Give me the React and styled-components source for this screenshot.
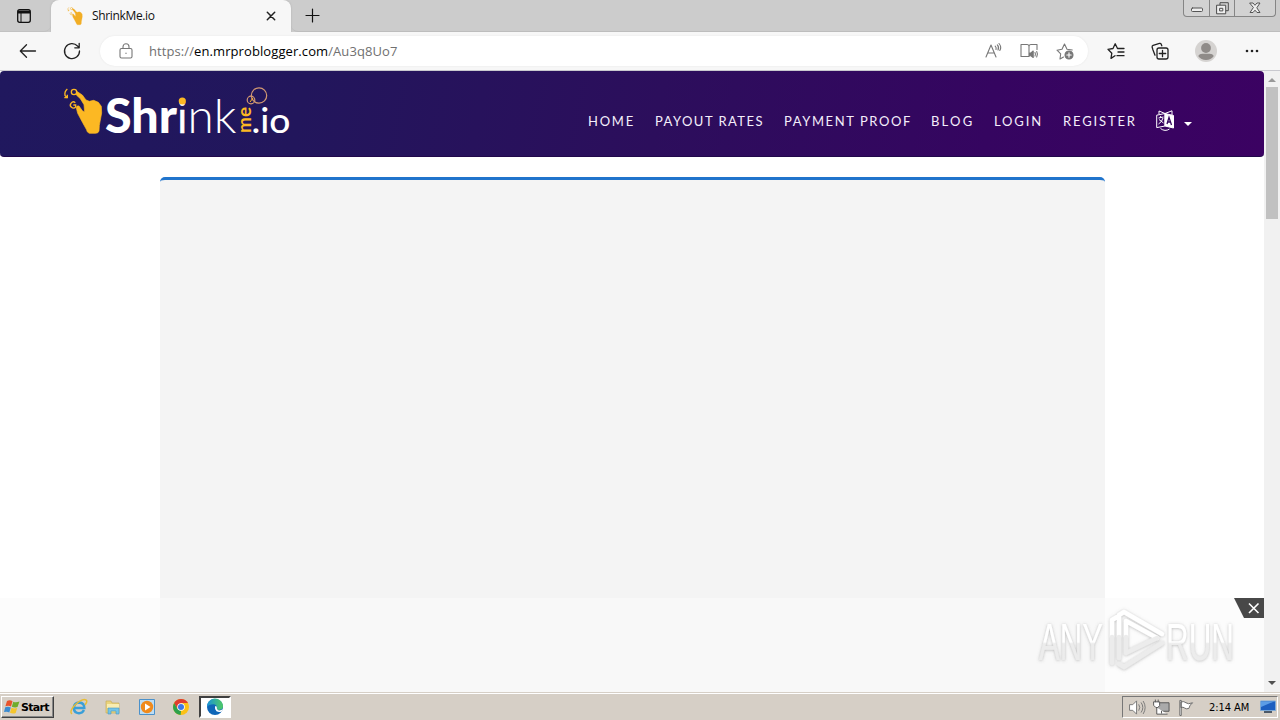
import React from "react";
import styled, { createGlobalStyle } from "styled-components";

const Global = createGlobalStyle`
  * { box-sizing: border-box; }
  body { margin: 0; overflow: hidden; background: #fff; }
  svg { display: block; flex: none; overflow: visible; }
`;

const Screen = styled.div`
  width: 1280px;
  height: 720px;
  display: flex;
  flex-direction: column;
  overflow: hidden;
  font-family: "Open Sans", sans-serif;
`;

const TabStrip = styled.div`
  display: flex;
  height: 32px;
  background: #cccccc;
`;
const Workspaces = styled.div`
  width: 51px;
  display: flex;
  align-items: center;
  padding-left: 16px;
  border-bottom: 1px solid #c2c2c2;
  border-bottom-right-radius: 7px;
`;
const Tab = styled.div`
  width: 240px;
  height: 32px;
  display: flex;
  align-items: center;
  padding: 0 15px 0 16px;
  background: #f7f7f7;
  border-radius: 8px 8px 0 0;
  box-shadow: 0 0 2px #aaa;
`;
const TabTitle = styled.span`
  flex: 1;
  margin-left: 9px;
  font-size: 12px;
  line-height: 30px;
  letter-spacing: -0.35px;
  color: #111;
`;
const StripRest = styled.div`
  flex: 1;
  display: flex;
  justify-content: space-between;
  padding-left: 14px;
  border-bottom: 1px solid #bdbdbd;
  border-bottom-left-radius: 7px;
`;
const NewTab = styled.div`
  display: flex;
  align-items: center;
`;
const WindowButtons = styled.div`
  display: flex;
  width: 93px;
  height: 17px;
  margin-right: 4px;
  border: 1px solid #858585;
  border-top: 0;
  border-radius: 0 0 4px 4px;
  background: #d2d2d2;
`;
const WindowButton = styled.div`
  width: ${(p) => p.$w}px;
  display: flex;
  align-items: center;
  justify-content: center;
  & + & { border-left: 1px solid #858585; }
`;

const Toolbar = styled.div`
  display: flex;
  align-items: center;
  height: 39px;
  background: #f7f7f7;
  border-bottom: 1px solid #c9c9cf;
`;
const Slot = styled.div`
  width: ${(p) => p.$w}px;
  display: flex;
  justify-content: center;
`;
const AddressBar = styled.div`
  width: 988px;
  height: 30px;
  display: flex;
  align-items: center;
  padding-left: 4px;
  border-radius: 15px;
  background: #fff;
  box-shadow: 0 0 2px #e4e4e4;
`;
const Url = styled.div`
  flex: 1;
  margin-left: 1px;
  font-size: 13px;
  line-height: 28px;
  letter-spacing: 0.09px;
  color: #707070;
  white-space: nowrap;
`;
const Host = styled.span`
  color: #000;
`;

const Viewport = styled.div`
  position: relative;
  display: flex;
  height: 621px;
`;
const Page = styled.div`
  width: 1264px;
  overflow: hidden;
`;
const Header = styled.header`
  display: flex;
  align-items: flex-start;
  height: 86px;
  border-radius: 4px;
  border-bottom: 1px solid #21084a;
  background: linear-gradient(100deg, #20185e 0%, #22165c 24%, #2c0e5c 52%, #350560 78%, #3b0262 100%);
`;
const Nav = styled.nav`
  display: flex;
  align-items: center;
  height: 20px;
  margin: 40px 0 0 278px;
`;
const NavLink = styled.a`
  width: ${(p) => p.$w}px;
  margin-right: 20px;
  font-family: Lato, sans-serif;
  font-size: 13px;
  line-height: 20px;
  letter-spacing: ${(p) => p.$ls}px;
  white-space: nowrap;
  color: #f4eefb;
`;
const Caret = styled.div`
  margin: 6px 0 0 10px;
  border: 4px solid transparent;
  border-top-color: #fff;
  border-bottom: 0;
`;
const Panel = styled.main`
  width: 945px;
  height: 530px;
  margin: 20px 0 0 160px;
  border-top: 3px solid #2074cc;
  border-radius: 5px 5px 0 0;
  background: #f4f4f4;
`;
const BannerAd = styled.div`
  position: absolute;
  left: 0;
  bottom: 0;
  width: 1264px;
  height: 94px;
  display: flex;
  justify-content: flex-end;
  background: rgba(250, 250, 250, 0.64);
`;
const Watermark = styled.div`
  padding: 9px 0 0;
`;
const ScrollBar = styled.div`
  width: 16px;
  display: flex;
  flex-direction: column;
  align-items: center;
  justify-content: space-between;
  padding: 7px 0;
  background: #f1f1f1;
`;
const ScrollTop = styled.div`
  display: flex;
  flex-direction: column;
  align-items: center;
  gap: 5px;
`;
const Arrow = styled.div`
  border: 4px solid transparent;
  border-${(p) => (p.$up ? "bottom" : "top")}-color: ${(p) => (p.$up ? "#999" : "#505050")};
  border-${(p) => (p.$up ? "top" : "bottom")}: 0;
`;
const Thumb = styled.div`
  width: 12px;
  height: 132px;
  background: #c1c1c1;
`;

const Taskbar = styled.div`
  display: flex;
  align-items: center;
  height: 28px;
  padding: 1px 2px 0 1px;
  background: #d6cfc6;
  border-top: 1px solid #d6cfc6;
  box-shadow: inset 0 1px #fff;
`;
const StartButton = styled.div`
  display: flex;
  align-items: center;
  gap: 1px;
  width: 53px;
  height: 22px;
  padding-left: 2px;
  border: 1px solid;
  border-color: #fff #404040 #404040 #fff;
  box-shadow: inset -1px -1px #888;
  font: bold 11px "DejaVu Sans", sans-serif;
  letter-spacing: -0.7px;
  color: #000;
`;
const QuickLaunch = styled.div`
  display: flex;
  align-items: center;
  margin-left: 8px;
`;
const ActiveTask = styled.div`
  width: 32px;
  height: 22px;
  display: flex;
  align-items: center;
  justify-content: center;
  margin-left: 1px;
  background: #fff;
  border: 2px solid;
  border-color: #404040 #fff #fff #404040;
`;
const Tray = styled.div`
  display: flex;
  align-items: center;
  width: 156px;
  height: 22px;
  margin-left: auto;
  padding-left: 5px;
  border: 1px solid;
  border-color: #777 #fff #fff #777;
`;
const Clock = styled.span`
  width: 51px;
  margin-left: 13px;
  font: 11px "DejaVu Sans Condensed", "DejaVu Sans", sans-serif;
  font-stretch: condensed;
  letter-spacing: -0.05px;
  white-space: nowrap;
  color: #000;
`;

const Line = ({ size = 18, box = 18, w = 1.2, color = "#222", children }) => (
  <svg width={size} height={size} viewBox={`0 0 ${box} ${box}`} fill="none" stroke={color} strokeWidth={w} strokeLinecap="round" strokeLinejoin="round">
    {children}
  </svg>
);

const HandShape = ({ fill }) => (
  <g fill={fill} stroke={fill}>
    <path strokeWidth="2" strokeLinejoin="round" d="M80 46 L97 57 L108 72 L118 76 L131 73 L145 79 L154 91 L155 111 L148 148 L147 165 Q145 172 137 172 L118 172 Q111 170 109 160 L98 140 L83 112 L79 96 Q79 88 87 90 L97 104 L104 108 L102 86 L91 68 L79 57 Z" />
    <circle cx="72" cy="48" r="8" fill="none" strokeWidth="4" />
    <path fill="none" strokeWidth="4" d="M76 80 A9 9 0 1 0 77 93 L77 87 H70 M52 39 Q43 46 45 58 L52 66 M43 65 H52 V56" />
  </g>
);

const Logo = () => (
  <svg width="310" height="85" viewBox="0 71 310 85">
    <g transform="translate(50 76) scale(.3333)"><HandShape fill="#fcb823" /></g>
    <g fill="#fff" fontFamily="Lato, sans-serif" fontSize="47">
      <text x="105" y="133" fontWeight="900" textLength="72" lengthAdjust="spacingAndGlyphs">Shr</text>
      <text x="177.5" y="133" fontSize="45" fontWeight="400" textLength="9.5" lengthAdjust="spacingAndGlyphs" stroke="#fff" strokeWidth=".6">i</text>
      <text x="187.5" y="133" fontWeight="300" textLength="49" lengthAdjust="spacingAndGlyphs">nk</text>
      <text x="251.5" y="133" fontSize="34" fontWeight="500" textLength="39" lengthAdjust="spacingAndGlyphs">.io</text>
    </g>
    <circle cx="182.3" cy="101" r="3.6" fill="#fcb823" />
    <text transform="translate(250.5 133) rotate(-90)" fill="#fcb823" fontFamily="Lato, sans-serif" fontSize="18" fontWeight="700" textLength="26" lengthAdjust="spacingAndGlyphs">me</text>
    <g fill="none" stroke="#d49a72">
      <circle cx="259" cy="95.5" r="7.7" strokeWidth="1.2" />
      <circle cx="251" cy="100" r="3.8" strokeWidth="1.2" />
      <path d="M250 102 L253 98" stroke="#fcb823" />
    </g>
  </svg>
);

const Translate = () => (
  <svg width="18" height="22" viewBox="0 0 18 22" fill="none" stroke="#fff">
    <path d="M.7 5.2 L9 3.5 V16 L.7 17.6 Z M3 4 V1 L9 3.5 L16 .8 V5" />
    <path d="M9 3.5 L17.5 5.5 V18 L9 16 Z" fill="#fff" />
    <path d="M11 14 L13 7.5 L15.5 15 M11.5 12 H15" stroke="#35065f" strokeWidth="1.3" />
    <path d="M2.5 8 L7.5 7 M4.5 6 L5 8 M7 8 Q6 12 2.5 14 M3 9.5 L7.5 13 M4.5 18.5 Q9 22 13.5 19" />
  </svg>
);

const AnyRun = () => (
  <svg width="196" height="64" viewBox="0 0 196 64">
    <defs>
      <filter id="soft" x="-10%" y="-10%" width="120%" height="120%">
        <feDropShadow dx="0" dy="0.5" stdDeviation="1.8" floodColor="#777" floodOpacity=".5" />
      </filter>
      <linearGradient id="fade" x1="0" y1="0" x2="0" y2="1">
        <stop offset=".5" stopColor="#fff" />
        <stop offset=".53" stopColor="#ececec" />
      </linearGradient>
    </defs>
    <g filter="url(#soft)" fontFamily="Liberation Sans, sans-serif" fontSize="51" fill="url(#fade)">
      <text x="1" y="52.5" textLength="64" lengthAdjust="spacingAndGlyphs">ANY</text>
      <text x="128" y="52.5" textLength="68" lengthAdjust="spacingAndGlyphs">RUN</text>
      <g fill="none" stroke="#f6f6f6" strokeWidth="4.5" strokeLinejoin="round" strokeLinecap="round">
        <path stroke="#fff" d="M74 30 V13 L79 10 M81 30 V8 L86 5 L124 27 M88 30 V14 L119 31" />
        <path stroke="#ececec" d="M74 30 V56 M81 30 V51 M88 30 V46 L119 31 M124 36 L86 60 L81 57" />
      </g>
    </g>
  </svg>
);

const WindowsFlag = () => (
  <svg width="16" height="16" viewBox="0 0 16 16">
    <path fill="#e8532b" d="M3 2 Q6 .5 8.5 2.3 L7 7.5 Q4.5 6 1.4 7.3Z" />
    <path fill="#70ac2c" d="M9.3 2.8 Q12 4 15.5 2.5 L13.5 8 Q11 9 7.8 7.7Z" />
    <path fill="#3b8bd0" d="M1.2 8.3 Q4 7 6.8 8.4 L5.3 13.5 Q3 12 0 13.1Z" />
    <path fill="#f5c52c" d="M7.5 8.7 Q10 10 13.2 9 L11.7 14 Q9 15.3 6 13.8Z" />
  </svg>
);
const Explorer = () => (
  <svg width="18" height="18" viewBox="0 0 18 18" fill="none">
    <path d="M14 12 Q12 15.5 8.8 15.2 Q4 15 3.8 9.8 Q4.2 4.5 9.2 4.4 Q14.5 4.8 14.3 10 H5" stroke="#3a9fd8" strokeWidth="2.5" />
    <path d="M2 16 Q-1 14 4 8 Q12 0 16 2 Q18 3 15 7" stroke="#e8bd35" strokeWidth="1.5" />
  </svg>
);
const Folder = () => (
  <svg width="16" height="16" viewBox="0 0 16 16">
    <path fill="#ead47d" stroke="#c8ad59" strokeWidth=".7" d="M1 2h5l1 2h7v10H1z" />
    <path fill="#f9edb1" d="M2 5h12v4H2z" />
    <path fill="#73c4e8" stroke="#4799c1" strokeWidth=".6" d="M3 9h11v6h-3v-3H6v3H3z" />
  </svg>
);
const MediaPlayer = () => (
  <svg width="16" height="16" viewBox="0 0 16 16">
    <path fill="#bdddf4" stroke="#4b91ca" d="M.5.5h15v15H.5z" />
    <circle cx="8" cy="8" r="6.2" fill="#f08a1c" />
    <path fill="#fff" d="M6 4.5 11.5 8 6 11.5z" />
  </svg>
);
const Chrome = () => (
  <svg width="16" height="16" viewBox="0 0 16 16">
    <circle cx="8" cy="8" r="8" fill="#fbc116" />
    <path fill="#df3c30" d="M1.1 4A8 8 0 0 1 15 4H8L4.5 10z" />
    <path fill="#2da14c" d="M1.1 4 4.6 10 8 12 7.6 16A8 8 0 0 1 1.1 4z" />
    <circle cx="8" cy="8" r="3.8" fill="#fff" />
    <circle cx="8" cy="8" r="3" fill="#3c78e7" />
  </svg>
);
const Edge = () => (
  <svg width="16" height="16" viewBox="0 0 16 16">
    <defs>
      <linearGradient id="wave"><stop stopColor="#1993d9" /><stop offset="1" stopColor="#50cb62" /></linearGradient>
    </defs>
    <circle cx="8" cy="8" r="8" fill="#0f66b8" />
    <path fill="url(#wave)" d="M0 8A8 8 0 0 1 16 7Q16 11 11 11 8.8 10.8 9.8 9 10 6 7 5.2 2 5 0 8z" />
    <path fill="#fff" d="M8 8Q8.5 6 9.8 8 9.5 11 12 11.4 14 11.5 16 10L14.6 12.4Q12 13.5 9.5 12.2 7.5 10.5 8 8z" />
  </svg>
);

export default function App() {
  return (
    <Screen>
      <Global />
      <TabStrip>
        <Workspaces>
          <svg width="16" height="16" viewBox="0 0 16 16">
            <rect x="1.7" y="1.7" width="12.6" height="12.6" rx="2" fill="none" stroke="#111" strokeWidth="1.3" />
            <path d="M2 2.5h12v3H2z" fill="#111" />
            <path d="M5 5v9" stroke="#111" />
          </svg>
        </Workspaces>
        <Tab>
          <svg width="16" height="18" viewBox="40 36 118 138"><HandShape fill="#f2ae25" /></svg>
          <TabTitle>ShrinkMe.io</TabTitle>
          <Line size={10} box={10} w={1.5}><path d="M1.3 1.3 8.7 8.7M8.7 1.3 1.3 8.7" /></Line>
        </Tab>
        <StripRest>
          <NewTab><Line size={15} box={15} color="#111"><path d="M1 7.5h13M7.5 1v13" /></Line></NewTab>
          <WindowButtons>
            <WindowButton $w={25}><Line size={12} box={12} w={1} color="#555"><rect x=".5" y="6" width="11" height="3.5" rx="1" fill="#eee" /></Line></WindowButton>
            <WindowButton $w={25}><Line size={13} box={13} w={1} color="#4c4c4c"><path d="M4 3V.7h8.3v8H10" /><rect x="1" y="3.2" width="8.7" height="8.6" fill="#eee" /><path d="M4 6.3h2.8v2.6H4z" /></Line></WindowButton>
            <WindowButton $w={41}><Line size={12} box={12} w={1} color="#555"><path fill="#eee" d="M1 1h3l2 2.3L8 1h3L7.8 5.8 11 10.5H8L6 8.2l-2 2.3H1l3.2-4.7z" /></Line></WindowButton>
          </WindowButtons>
        </StripRest>
      </TabStrip>

      <Toolbar>
        <Slot $w={56}><Line w={1.3}><path d="M16.5 9H1.5M7.5 2.7 1.3 9l6.2 6.3" /></Line></Slot>
        <Slot $w={32}><Line w={1.3}><path d="M16.5 9A7.5 7.5 0 1 1 14.5 4l1.7 1.6M16.2 1.3v4.5h-4.4" /></Line></Slot>
        <Slot $w={12} />
        <AddressBar>
          <Slot $w={44}><Line size={16} box={16} w={1.1} color="#777"><rect x="2" y="5.5" width="12" height="9.5" rx="1.5" /><path d="M5 5.5V3.8a3 3 0 0 1 6 0v1.7M8 10v.5" /></Line></Slot>
          <Url>https://<Host>en.mrproblogger.com</Host>/Au3q8Uo7</Url>
          <Slot $w={36}><Line w={1.1} color="#777"><path d="M2 15 7 3l5 12M4 11h6.4M11.2 4.2q1.5 1.6.8 3.3M13.3 2.8q2.2 2.4.7 5.2M15 1.5q3 3.5.8 7" /></Line></Slot>
          <Slot $w={36}><Line w={1.1} color="#777"><path d="M9 14.5H1V2.5h6q2 0 2 2 0-2 2-2h6v5M9 4.5v10" /><path fill="#777" d="M9.5 11h1.5l2.2-2v6.5L11 13.7H9.5z" /><path d="M15 10.5q1 1.8 0 3.5M16.7 9.5q1.6 2.7 0 5.5" /></Line></Slot>
          <Slot $w={36}><Line color="#777" w={1.1}><path d="M7.5 15 4 17l.7-5.2L1 8.2l5-.9L8.5 2 11 7.2l5.3.8" /><circle cx="13" cy="13" r="4" fill="#777" /><path stroke="#fff" d="M13 10.8v4.4M10.8 13h4.4" /></Line></Slot>
          <Slot $w={5} />
        </AddressBar>
        <Slot $w={56}><Line w={1.3}><path d="M8 13.7 4 16.4l.8-5.2L1 7.3l5-.8 2.2-4.7 2.3 4.7H17M11 10h6M10 13.7h7" /></Line></Slot>
        <Slot $w={32}><Line w={1.3}><path d="M4 13.2 2 8 1.1 5q0-1.2 1-1.6L8.5 1.4q1.2-.3 1.6.6l.7 1.8" /><rect x="6" y="6" width="11" height="11" rx="2" /><path d="M11.5 8.3v6.4M8.3 11.5h6.4" /></Line></Slot>
        <Slot $w={60}>
          <svg width="22" height="22" viewBox="0 0 22 22"><circle cx="11" cy="11" r="11" fill="#d5d3d1" /><circle cx="11" cy="8" r="4.9" fill="#8f8b88" /><path fill="#8f8b88" d="M3.2 16q1.2-2.2 4-2.2h7.6q2.8 0 4 2.2Q16 20 11 20T3.2 16z" /></svg>
        </Slot>
        <Slot $w={32}><svg width="14" height="4" viewBox="0 0 14 4" fill="#222"><circle cx="2" cy="2" r="1.3" /><circle cx="7" cy="2" r="1.3" /><circle cx="12" cy="2" r="1.3" /></svg></Slot>
      </Toolbar>

      <Viewport>
        <Page>
          <Header>
            <Logo />
            <Nav>
              <NavLink $w={47} $ls={1.75}>HOME</NavLink>
              <NavLink $w={109} $ls={1.45}>PAYOUT RATES</NavLink>
              <NavLink $w={127} $ls={1.58}>PAYMENT PROOF</NavLink>
              <NavLink $w={43} $ls={2.2}>BLOG</NavLink>
              <NavLink $w={49} $ls={1.85}>LOGIN</NavLink>
              <NavLink $w={73} $ls={1.85}>REGISTER</NavLink>
              <Translate />
              <Caret />
            </Nav>
          </Header>
          <Panel />
        </Page>
        <ScrollBar>
          <ScrollTop><Arrow $up /><Thumb /></ScrollTop>
          <Arrow />
        </ScrollBar>
        <BannerAd>
          <Watermark><AnyRun /></Watermark>
          <svg width="30" height="20" viewBox="0 0 30 20"><path fill="#484848" d="M0 0h30v20H10z" /><path stroke="#fff" strokeWidth="1.6" d="m15 5.5 9.5 9.5m0-9.5L15 15" /></svg>
        </BannerAd>
      </Viewport>

      <Taskbar>
        <StartButton><WindowsFlag />Start</StartButton>
        <QuickLaunch>
          <Slot $w={34}><Explorer /></Slot>
          <Slot $w={34}><Folder /></Slot>
          <Slot $w={34}><MediaPlayer /></Slot>
          <Slot $w={34}><Chrome /></Slot>
          <ActiveTask><Edge /></ActiveTask>
        </QuickLaunch>
        <Tray>
          <Slot $w={18}><Line size={17} color="#777" w={1}><path fill="#fff" d="M1 6h3l4-4v14l-4-4H1z" /><path d="M10.5 6q2 3 0 6M13 4q3.5 5 0 10M15.2 2.5q4 6.5 0 13" /></Line></Slot>
          <Slot $w={30}><Line size={17} color="#555" w={1}><rect x="5" y="4" width="12" height="9" fill="#aaa" stroke="#555" /><path fill="#fff" d="M1 3h6v4L5 9H3L1 7zM2.5 1v2M5.5 1v2M4 9v7h11M9 13v2" /></Line></Slot>
          <Slot $w={18}><Line size={17} color="#666" w={1}><path fill="#fff" d="M3 17V1.5h1.5V17zM4.5 3q3-1 5 1t7 0q-3 2-4 6-3 1-4.5-.5T4.5 9z" /></Line></Slot>
          <Slot $w={2} />
          <Clock>2:14 AM</Clock>
          <svg width="16" height="14" viewBox="0 0 16 14"><path fill="#1d5fc0" stroke="#7da9d6" d="M.5 1h15v9.5H.5z" /><path fill="#5c9de6" d="M1 1.5h13L1 7z" /><path fill="#4c5968" d="M4 11h8v2H4z" /></svg>
        </Tray>
      </Taskbar>
    </Screen>
  );
}
